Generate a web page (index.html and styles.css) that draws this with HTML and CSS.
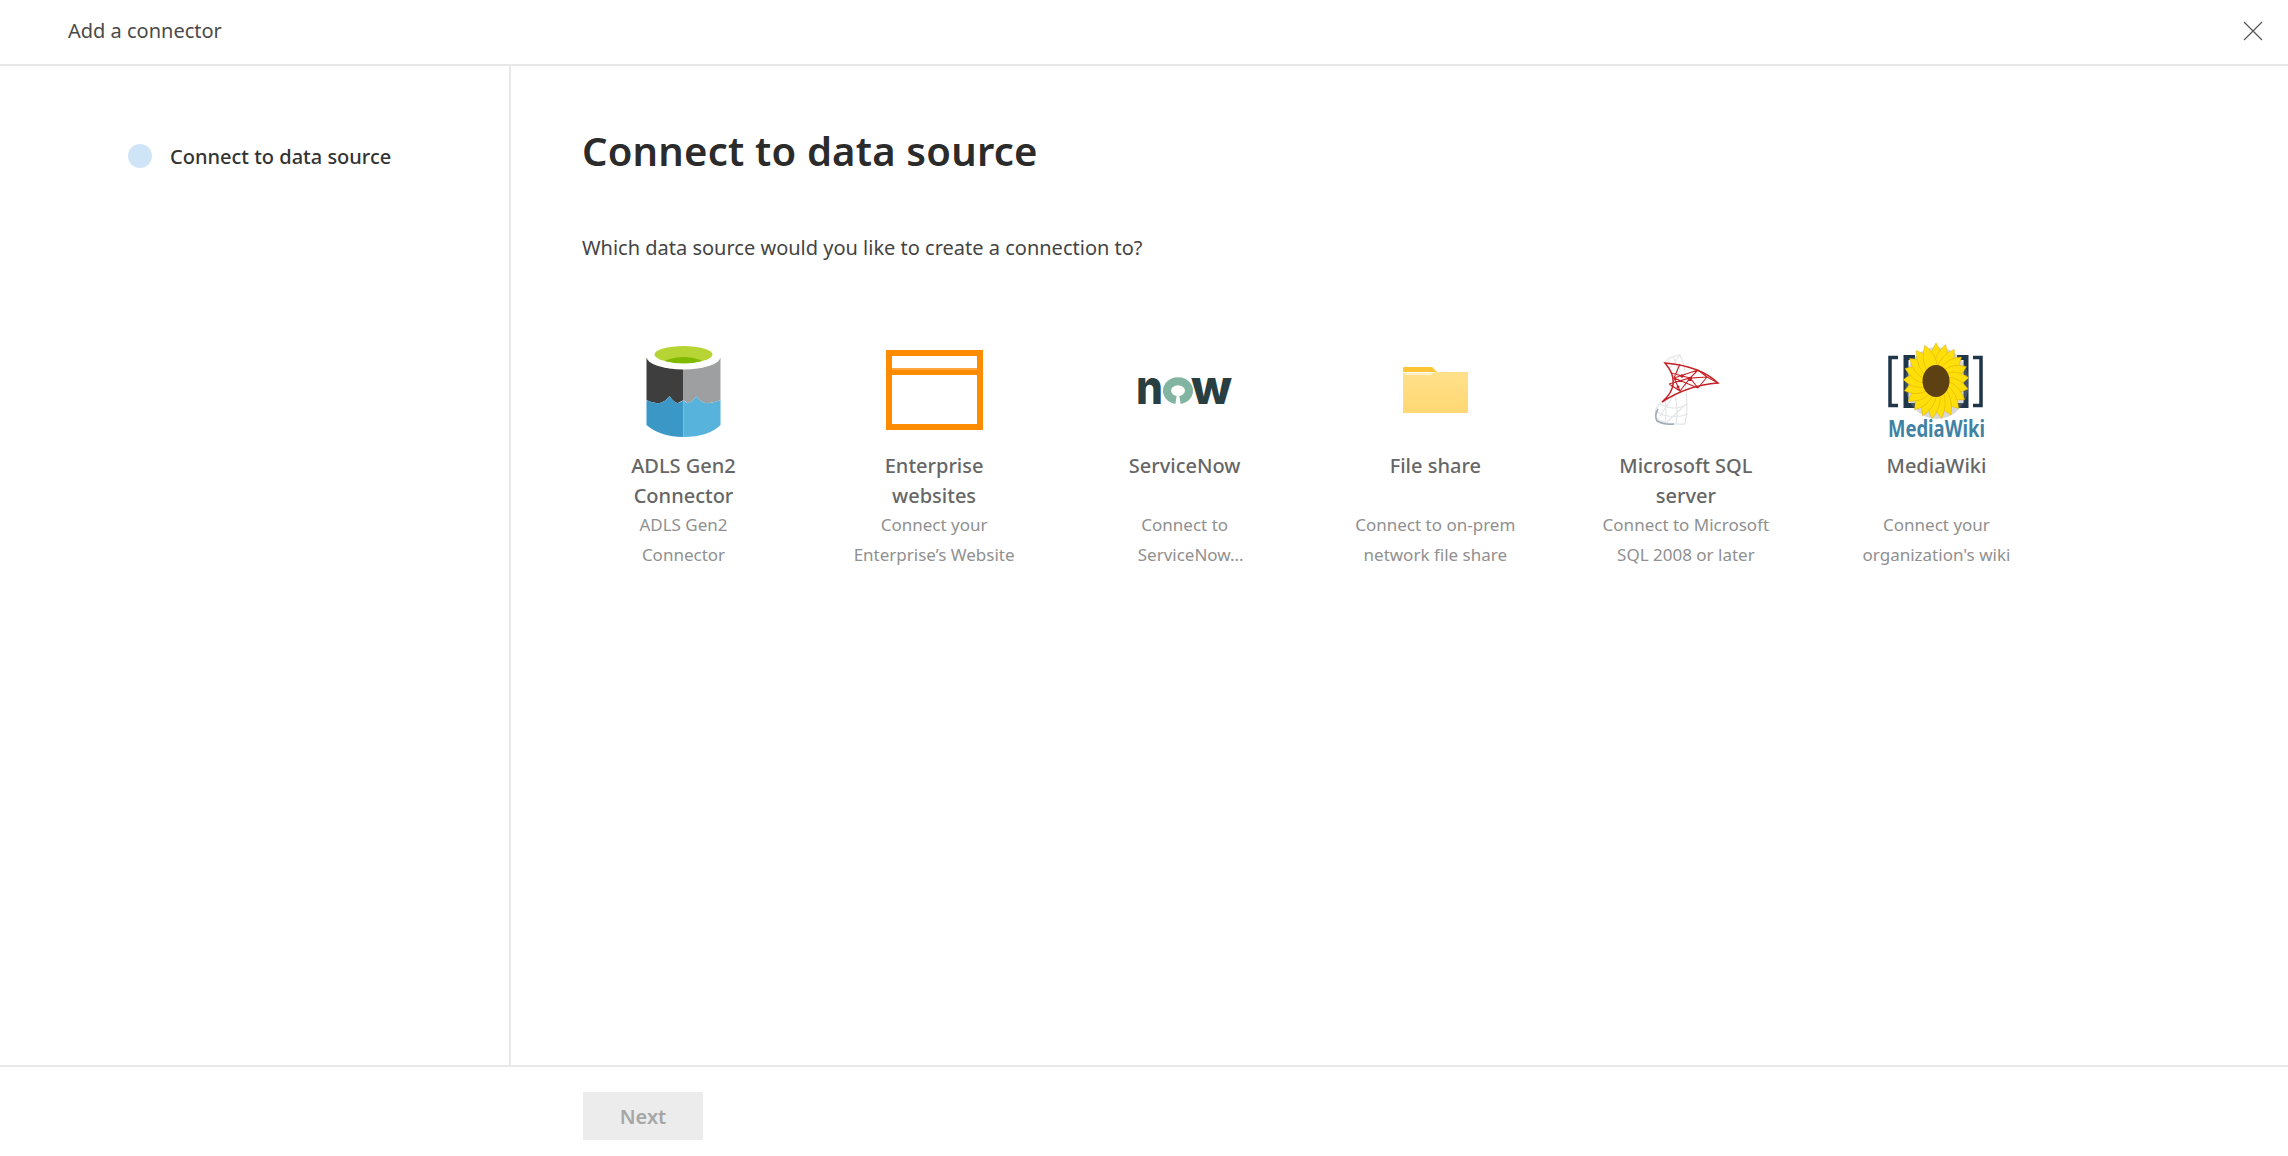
FILE: index.html
```html
<!DOCTYPE html>
<html lang="en">
<head>
    <meta charset="UTF-8">
    <meta name="viewport" content="width=device-width, initial-scale=1.0">
    <title>Add a connector</title>
    <link rel="stylesheet" href="styles.css">
</head>
<body>
    <div class="app">
        <header class="topbar">
            <span class="topbar-title">Add a connector</span>
            <button class="close-btn" aria-label="Close">
                <svg width="20" height="20" viewBox="0 0 20 20"><path d="M1 1L19 19M19 1L1 19" stroke="#555" stroke-width="1.2" fill="none"/></svg>
            </button>
        </header>

        <div class="content">
            <aside class="sidebar">
                <div class="step">
                    <span class="step-dot"></span>
                    <span class="step-label">Connect to data source</span>
                </div>
            </aside>

            <main class="main">
                <h1>Connect to data source</h1>
                <p class="question">Which data source would you like to create a connection to?</p>

                <div class="tiles">
                    <div class="tile">
                        <svg class="tile-icon" viewBox="1.5 0 100 100">
                            <path d="M14 18H51V60L45 63.3Q41 62 37 56Q32 63 25 63.3Q19 63 14 60Z" fill="#3e3e3e"/>
                            <path d="M51 18H88V60Q82 63 75 63.3Q68 63 64 56Q60 62 55 63.3L51 60Z" fill="#9d9fa1"/>
                            <path d="M14 60Q19 63 25 63.3Q32 63 37 56Q41 62 45 63.3Q48 63 51 60V97Q28 97 14 85Z" fill="#3a97c6"/>
                            <path d="M51 60Q53 63 55 63.3Q60 62 64 56Q68 63 75 63.3Q82 63 88 60V85Q76 97 51 97Z" fill="#57b3db"/>
                            <ellipse cx="51" cy="17" rx="37" ry="12.5" fill="#fff"/>
                            <ellipse cx="51" cy="14.5" rx="29" ry="8.5" fill="#b6d534"/>
                            <path d="M32 21Q51 13 70 21Q51 26 32 21Z" fill="#7fba00"/>
                        </svg>
                        <div class="tile-title">ADLS Gen2<br>Connector</div>
                        <div class="tile-desc">ADLS Gen2<br>Connector</div>
                    </div>

                    <div class="tile">
                        <svg class="tile-icon" viewBox="0 0 100 100">
                            <rect x="5" y="13" width="91" height="74" fill="none" stroke="#ff8c00" stroke-width="6"/>
                            <rect x="8" y="28" width="85" height="7" fill="#ff8c00"/>
                            <rect x="8" y="28" width="85" height="2" fill="#ffa640"/>
                        </svg>
                        <div class="tile-title">Enterprise<br>websites</div>
                        <div class="tile-desc">Connect your<br>Enterprise’s Website</div>
                    </div>

                    <div class="tile">
                        <svg class="tile-icon" viewBox="0 0 100 100">
                            <text class="logo-now" x="1" y="64" textLength="27" lengthAdjust="spacingAndGlyphs">n</text>
                            <path d="M41 60A11 9.500 0 1 1 45 60" fill="none" stroke="#81b5a1" stroke-width="8"/>
                            <text class="logo-now" x="56" y="64" textLength="41" lengthAdjust="spacingAndGlyphs">w</text>
                        </svg>
                        <div class="tile-title">ServiceNow<br>&nbsp;</div>
                        <div class="tile-desc">Connect to<br><span class="nudge">ServiceNow...</span></div>
                    </div>

                    <div class="tile">
                        <svg class="tile-icon" viewBox="0 0 100 100">
                            <defs>
                                <linearGradient id="folderFront" x1="0" y1="0" x2="0" y2="1">
                                    <stop offset="0" stop-color="#ffe08a"/>
                                    <stop offset="1" stop-color="#ffd873"/>
                                </linearGradient>
                            </defs>
                            <path d="M18 28Q18 27 19 27H47L52 32H18Z" fill="#ffc433"/>
                            <path d="M18 33H47L52 32H83V73H18Z" fill="url(#folderFront)"/>
                            <path d="M20 35H45L48 33.5H20Z" fill="#fff6d8"/>
                        </svg>
                        <div class="tile-title">File share<br>&nbsp;</div>
                        <div class="tile-desc">Connect to on-prem<br>network file share</div>
                    </div>

                    <div class="tile">
                        <svg class="tile-icon" viewBox="0 0 100 100">
                            <g fill="none" stroke="#e3e4e6" stroke-width="1.100">
                                <path d="M29 23Q31 17 44 15Q50 26 49 38M26 62Q14 72 23 80Q34 85 49 84Q53 68 49 44"/>
                                <path d="M37 16Q43 28 42 40M32 30L44 15M24 64Q38 72 51 64M20 72Q36 80 52 74M29 60Q31 72 29 83M38 53Q43 68 40 84M24 76L38 55M30 83L50 64"/>
                            </g>
                            <path d="M22 69Q18 76 21 81Q28 85 38 84" fill="none" stroke="#9eaab8" stroke-width="1.600"/>
                            <g fill="none" stroke="#c42127" stroke-width="1.100">
                                <path d="M29 23Q64 26 82 43Q52 45 26 62Q47 44 29 23Z" stroke-width="1.500"/>
                                <path d="M35 33L54 38L44 51L38 38L62 30L54 38L71 37M38 38L62 48M33 44L54 38L62 48M44 24L38 38M62 30L71 37M44 51L33 44M71 37L62 48M71 37L82 43"/>
                            </g>
                            <circle cx="54" cy="39" r="2.200" fill="#c42127"/>
                            <circle cx="46" cy="36" r="1.800" fill="#c42127"/>
                            <circle cx="42" cy="47" r="1.500" fill="#c42127"/>
                        </svg>
                        <div class="tile-title">Microsoft SQL<br>server</div>
                        <div class="tile-desc">Connect to Microsoft<br>SQL 2008 or later</div>
                    </div>

                    <div class="tile">
                        <svg class="tile-icon" viewBox="0 0 100 100">
                            <defs>
                                <path id="petal" d="M0 -41Q10 -28 7 -13L-7 -13Q-10 -28 0 -41Z" fill="#ffdf0a" stroke="#d9a800" stroke-width="0.5"/>
                            </defs>
                            <g fill="none" stroke="#1f3549">
                                <path d="M12 17.5H4V65.500H12" stroke-width="3.5"/>
                                <path d="M29 17.500H20V65.500H29" stroke-width="5"/>
                                <path d="M71 17.500H80V65.500H71" stroke-width="5"/>
                                <path d="M87 17.5H95V65.500H87" stroke-width="3.5"/>
                            </g>
                            <ellipse cx="51" cy="43" rx="32" ry="36" fill="#8b8b8b" opacity="0.35"/>
                            <g transform="translate(50 41) scale(0.8 0.93)">
                                <use href="#petal" transform="rotate(0)"/>
                                <use href="#petal" transform="rotate(17)"/>
                                <use href="#petal" transform="rotate(34)"/>
                                <use href="#petal" transform="rotate(51)"/>
                                <use href="#petal" transform="rotate(68)"/>
                                <use href="#petal" transform="rotate(85)"/>
                                <use href="#petal" transform="rotate(102)"/>
                                <use href="#petal" transform="rotate(119)"/>
                                <use href="#petal" transform="rotate(136)"/>
                                <use href="#petal" transform="rotate(153)"/>
                                <use href="#petal" transform="rotate(170)"/>
                                <use href="#petal" transform="rotate(187)"/>
                                <use href="#petal" transform="rotate(204)"/>
                                <use href="#petal" transform="rotate(221)"/>
                                <use href="#petal" transform="rotate(238)"/>
                                <use href="#petal" transform="rotate(255)"/>
                                <use href="#petal" transform="rotate(272)"/>
                                <use href="#petal" transform="rotate(289)"/>
                                <use href="#petal" transform="rotate(306)"/>
                                <use href="#petal" transform="rotate(323)"/>
                                <use href="#petal" transform="rotate(340)"/>
                            </g>
                            <ellipse cx="50" cy="41" rx="13.500" ry="16" fill="#5d4112"/>
                            <text class="logo-wiki" x="2" y="97" textLength="97" lengthAdjust="spacingAndGlyphs">MediaWiki</text>
                        </svg>
                        <div class="tile-title">MediaWiki<br>&nbsp;</div>
                        <div class="tile-desc">Connect your<br>organization's wiki</div>
                    </div>
                </div>
            </main>
        </div>

        <footer class="footer">
            <button class="next-btn" disabled>Next</button>
        </footer>
    </div>
</body>
</html>
```

FILE: styles.css
```css
body {
    margin: 0;
    font-family: "Noto Sans", "Open Sans", Arial, sans-serif;
    background-color: #fff;
    color: #333;
}

.app {
    display: flex;
    flex-direction: column;
    height: 100vh;
}

.topbar {
    display: flex;
    align-items: center;
    justify-content: space-between;
    flex-shrink: 0;
    height: 61px;
    padding: 0 25px 3px 68px;
    border-bottom: 2px solid #e8e8e8;
}

.topbar-title {
    font-size: 20px;
    color: #4a4a4a;
}

.close-btn {
    display: flex;
    padding: 0;
    background: none;
    border: none;
    cursor: pointer;
}

.content {
    display: flex;
    flex-grow: 1;
    min-height: 0;
}

.sidebar {
    flex-shrink: 0;
    box-sizing: border-box;
    width: 511px;
    padding: 75px 0 0 128px;
    border-right: 2px solid #e8e8e8;
}

.step {
    display: flex;
    align-items: center;
    gap: 18px;
    height: 30px;
}

.step-dot {
    width: 24px;
    height: 24px;
    border-radius: 50%;
    background-color: #cfe5f7;
}

.step-label {
    font-size: 20px;
    font-weight: 500;
    color: #333;
}

.main {
    flex-grow: 1;
    padding: 58px 0 0 71px;
}

h1 {
    margin: 0;
    font-size: 40px;
    line-height: 54px;
    font-weight: 600;
    letter-spacing: 0.2px;
    color: #2b2b2b;
}

.question {
    margin: 55px 0 0;
    font-size: 20px;
    line-height: 30px;
    color: #444;
}

.tiles {
    display: flex;
    gap: 50.6px;
    margin: 77px 0 0 1.5px;
}

.tile {
    width: 200px;
    text-align: center;
}

.tile-icon {
    display: block;
    width: 100px;
    height: 100px;
    margin: 0 auto 11px;
    overflow: visible;
}

.tile-title {
    margin-bottom: -1px;
    font-size: 20px;
    line-height: 30px;
    font-weight: 500;
    color: #666;
}

.tile-desc {
    font-size: 17px;
    line-height: 30px;
    color: #909090;
}

.nudge {
    padding-left: 12px;
}

.logo-now {
    font-family: Inter, sans-serif;
    font-size: 48px;
    font-weight: 800;
    fill: #293e40;
}

.logo-wiki {
    font-family: "Noto Sans", sans-serif;
    font-size: 23px;
    font-weight: 700;
    fill: #3f82a4;
}

.footer {
    flex-shrink: 0;
    box-sizing: border-box;
    height: 91px;
    padding: 25px 0 0 583px;
    border-top: 2px solid #e8e8e8;
}

.next-btn {
    width: 120px;
    height: 48px;
    font-family: inherit;
    font-size: 20px;
    font-weight: 600;
    color: #a6a6a6;
    background-color: #ececec;
    border: none;
}
```
